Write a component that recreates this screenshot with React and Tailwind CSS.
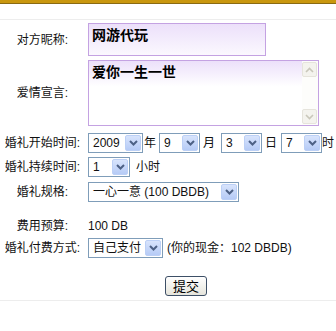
import React from 'react';

const Chevron = () => (
    <svg width="9" height="6" viewBox="0 0 9 6">
        <path d="M1 1 L4.5 4.5 L8 1" fill="none" stroke="#4d6185" strokeWidth="2" />
    </svg>
);

const Select = ({ width, value }) => (
    <div className={`flex items-center h-[20px] border border-[#7f9db9] bg-white ${width}`}>
        <span className="flex-1 pl-[4px] whitespace-nowrap leading-none">{value}</span>
        <span className="w-[16px] h-[16px] mr-px rounded-[2px] border border-[#bcd0f6] bg-gradient-to-b from-[#d8e4fc] to-[#b6cbf6] flex items-center justify-center">
            <Chevron />
        </span>
    </div>
);

const ScrollArrow = ({ up }) => (
    <div className="w-[15px] h-[15px] rounded-[2px] border border-[#e6e4dc] bg-[#f4f3ee] flex items-center justify-center">
        <svg width="9" height="6" viewBox="0 0 9 6">
            <path d={up ? 'M1 5 L4.5 1.5 L8 5' : 'M1 1 L4.5 4.5 L8 1'} fill="none" stroke="#c9c7ba" strokeWidth="1.6" />
        </svg>
    </div>
);

const Label = ({ children }) => (
    <div className="w-[85px] shrink-0 text-center whitespace-nowrap">{children}</div>
);

export default function App() {
    return (
        <div className="w-[336px] h-[331px] overflow-hidden bg-white text-[12px] text-[#111] font-['Liberation_Sans','Noto_Sans_CJK_SC',sans-serif]">
            <div className="h-[3px] bg-[#c9970e]" />
            <div className="h-px bg-[#8a6a12]" />
            <div className="h-[15px]" />
            <div className="h-px bg-[#ededed]" />

            <div className="mt-[3px] flex items-center h-[33px]">
                <Label>对方昵称:</Label>
                <div className="ml-[3px] w-[178px] h-[33px] border border-[#c4a2e2] bg-gradient-to-b from-[#ece0fa] to-[#fbf8fe] px-[3px] pt-[1px]">
                    <span className="text-[14px] font-bold text-black">网游代玩</span>
                </div>
            </div>

            <div className="mt-[4px] flex items-center h-[66px]">
                <Label>爱情宣言:</Label>
                <div className="ml-[3px] w-[231px] h-[66px] border border-[#c4a2e2] bg-gradient-to-b from-[#ece0fa] via-white via-40% to-white flex">
                    <div className="flex-1 px-[3px] pt-[1px]">
                        <span className="text-[14px] font-bold text-black">爱你一生一世</span>
                    </div>
                    <div className="w-[16px] flex flex-col justify-between py-[1px] bg-[#fdfdfb]">
                        <ScrollArrow up />
                        <ScrollArrow />
                    </div>
                </div>
            </div>

            <div className="mt-[7px] flex items-center h-[20px]">
                <Label>婚礼开始时间:</Label>
                <div className="ml-[3px] flex items-center">
                    <Select width="w-[55px]" value="2009" />
                    <span className="w-[16px] pl-px">年</span>
                    <Select width="w-[41px]" value="9" />
                    <span className="ml-[3px] w-[18px]">月</span>
                    <Select width="w-[41px]" value="3" />
                    <span className="ml-[3px] w-[16px]">日</span>
                    <Select width="w-[41px]" value="7" />
                    <span>时</span>
                </div>
            </div>

            <div className="mt-[4px] flex items-center h-[20px]">
                <Label>婚礼持续时间:</Label>
                <div className="ml-[3px] flex items-center">
                    <Select width="w-[42px]" value="1" />
                    <span className="ml-[6px]">小时</span>
                </div>
            </div>

            <div className="mt-[5px] flex items-center h-[20px]">
                <Label>婚礼规格:</Label>
                <div className="ml-[3px]">
                    <Select width="w-[151px]" value="一心一意 (100 DBDB)" />
                </div>
            </div>

            <div className="mt-[14px] flex items-center h-[20px]">
                <Label>费用预算:</Label>
                <span className="ml-[3px]">100 DB</span>
            </div>

            <div className="mt-[2px] flex items-center h-[20px]">
                <Label>婚礼付费方式:</Label>
                <div className="ml-[3px] flex items-center">
                    <Select width="w-[75px]" value="自己支付" />
                    <span className="ml-[4px] whitespace-nowrap">(你的现金：102 DBDB)</span>
                </div>
            </div>

            <div className="mt-[18px] flex">
                <button className="ml-[165px] w-[42px] h-[20px] rounded-[3px] border border-[#3d4f66] bg-gradient-to-b from-white to-[#e6e5dc] text-[13px] leading-none text-black">
                    提交
                </button>
            </div>

            <div className="mt-[4px] h-px bg-[#ededed]" />
        </div>
    );
}
